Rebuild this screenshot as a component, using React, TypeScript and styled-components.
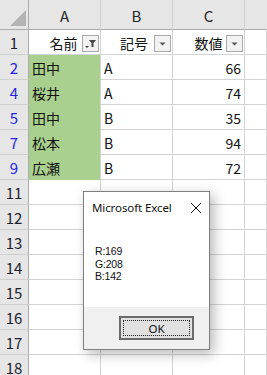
import React, { ReactElement } from 'react';
import styled, { createGlobalStyle, css } from 'styled-components';

type Row = {
  num: number;
  name?: string;
  code?: string;
  value?: number;
};

const rows: Row[] = [
  { num: 2, name: '田中', code: 'A', value: 66 },
  { num: 4, name: '桜井', code: 'A', value: 74 },
  { num: 5, name: '田中', code: 'B', value: 35 },
  { num: 7, name: '松本', code: 'B', value: 94 },
  { num: 9, name: '広瀬', code: 'B', value: 72 },
  { num: 11 },
  { num: 12 },
  { num: 13 },
  { num: 14 },
  { num: 15 },
  { num: 16 },
  { num: 17 },
  { num: 18 },
];

const messageLines = ['R:169', 'G:208', 'B:142'];

const GRID = '#d4d4d4';
const GREEN = '#a9d08e';

function FilterIcon({ applied }: { applied?: boolean }): ReactElement {
  if (applied) {
    return (
      <svg width="15" height="15" viewBox="0 0 15 15">
        <polygon points="2,10 6,10 4,12" fill="#444" />
        <polygon points="6,4 13,4 10.5,7 10.5,11 8.5,11 8.5,7" fill="#444" />
      </svg>
    );
  }
  return (
    <svg width="15" height="15" viewBox="0 0 15 15">
      <polygon points="4.5,6.5 10.5,6.5 7.5,9.5" fill="#555" />
    </svg>
  );
}

function App(): ReactElement {
  return (
    <>
      <GlobalStyle />
      <Page>
        <Sheet>
          <Corner>
            <svg width="28" height="29" viewBox="0 0 28 29">
              <polygon points="26,10 26,26 10,26" fill="#b4b4b4" />
            </svg>
          </Corner>
          <ColHeader>A</ColHeader>
          <ColHeader>B</ColHeader>
          <ColHeader>C</ColHeader>
          <ColHeader $last />

          <RowHeader>1</RowHeader>
          <Cell $align="center">
            <HeaderLabel $shift={-2}>名前</HeaderLabel>
            <FilterButton>
              <FilterIcon applied />
            </FilterButton>
          </Cell>
          <Cell $align="center">
            <HeaderLabel $shift={-5}>記号</HeaderLabel>
            <FilterButton>
              <FilterIcon />
            </FilterButton>
          </Cell>
          <Cell $align="center">
            <HeaderLabel $shift={0}>数値</HeaderLabel>
            <FilterButton>
              <FilterIcon />
            </FilterButton>
          </Cell>
          <Cell />

          {rows.map((r) => (
            <React.Fragment key={r.num}>
              <RowHeader $filtered={!!r.name}>{r.num}</RowHeader>
              <Cell $fill={r.name ? GREEN : undefined}>{r.name}</Cell>
              <Cell>{r.code}</Cell>
              <Cell $align="right">{r.value}</Cell>
              <Cell />
            </React.Fragment>
          ))}
        </Sheet>

        <Dialog>
          <TitleBar>
            <Title>Microsoft Excel</Title>
            <CloseButton>
              <svg width="12" height="12" viewBox="0 0 12 12">
                <path d="M1 1 L11 11 M11 1 L1 11" stroke="#111" strokeWidth="1" />
              </svg>
            </CloseButton>
          </TitleBar>
          <Message>
            {messageLines.map((line) => (
              <MessageLine key={line}>{line}</MessageLine>
            ))}
          </Message>
          <Footer>
            <OkButton>
              <OkFocus>OK</OkFocus>
            </OkButton>
          </Footer>
        </Dialog>
      </Page>
    </>
  );
}

const GlobalStyle = createGlobalStyle`
  html, body {
    margin: 0;
    padding: 0;
    background: #ffffff;
    overflow: hidden;
  }
`;

const Page = styled.div`
  position: relative;
  width: 267px;
  height: 375px;
  overflow: hidden;
  font-family: 'Noto Sans CJK JP', 'Noto Sans', sans-serif;
`;

const Sheet = styled.div`
  display: grid;
  grid-template-columns: 29px 72px 72px 72px 1fr;
  grid-template-rows: 30px;
  grid-auto-rows: 25px;
`;

const headerBase = css`
  box-sizing: border-box;
  background: #e6e6e6;
  color: #262626;
  font-size: 15px;
  display: flex;
  align-items: center;
  justify-content: center;
`;

const Corner = styled.div`
  ${headerBase}
  border-right: 1px solid #ababab;
  border-bottom: 1px solid #ababab;
  align-items: flex-end;
  justify-content: flex-end;
`;

type ColHeaderProps = { $last?: boolean };
const ColHeader = styled.div<ColHeaderProps>`
  ${headerBase}
  border-right: 1px solid ${(p) => (p.$last ? '#e6e6e6' : '#cfcfcf')};
  border-bottom: 1px solid #ababab;
  padding-top: 1px;
`;

type RowHeaderProps = { $filtered?: boolean };
const RowHeader = styled.div<RowHeaderProps>`
  ${headerBase}
  border-right: 1px solid #ababab;
  border-bottom: 1px solid #cfcfcf;
  color: ${(p) => (p.$filtered ? '#2424e0' : '#1e1e2e')};
`;

type CellProps = { $fill?: string; $align?: 'left' | 'center' | 'right' };
const Cell = styled.div<CellProps>`
  position: relative;
  box-sizing: border-box;
  display: flex;
  align-items: center;
  justify-content: ${(p) =>
    p.$align === 'right' ? 'flex-end' : p.$align === 'center' ? 'center' : 'flex-start'};
  padding: 1px 3px 0 3px;
  font-size: 14px;
  color: #111;
  background: ${(p) => p.$fill ?? '#ffffff'};
  border-right: 1px solid ${GRID};
  border-bottom: 1px solid ${(p) => p.$fill ?? GRID};
  white-space: nowrap;
`;

type HeaderLabelProps = { $shift: number };
const HeaderLabel = styled.span<HeaderLabelProps>`
  margin-left: ${(p) => p.$shift}px;
`;

const FilterButton = styled.div`
  position: absolute;
  right: 1px;
  bottom: 2px;
  width: 15px;
  height: 15px;
  border: 1px solid #a9a9a9;
  background: #f2f2f2;
  display: flex;
`;

const Dialog = styled.div`
  position: absolute;
  left: 83px;
  top: 191px;
  width: 127px;
  box-sizing: border-box;
  border: 1px solid #7f7f7f;
  background: #ffffff;
  box-shadow: 4px 4px 12px rgba(0, 0, 0, 0.28);
  font-family: 'Noto Sans', 'Liberation Sans', sans-serif;
  color: #111;
`;

const TitleBar = styled.div`
  height: 31px;
  display: flex;
  align-items: center;
  justify-content: space-between;
  padding: 0 7px 0 8px;
`;

const Title = styled.span`
  font-size: 11.5px;
  letter-spacing: -0.1px;
`;

const CloseButton = styled.span`
  display: flex;
  margin-top: 1px;
`;

const Message = styled.div`
  height: 84px;
  box-sizing: border-box;
  padding: 22px 0 0 11px;
  display: flex;
  flex-direction: column;
`;

const MessageLine = styled.div`
  height: 12.5px;
  font-family: 'Liberation Sans', Arial, sans-serif;
  font-size: 10.5px;
  line-height: 12.5px;
  letter-spacing: -0.2px;
`;

const Footer = styled.div`
  height: 42px;
  background: #f0f0f0;
  display: flex;
  align-items: center;
  justify-content: flex-end;
  padding-right: 15px;
`;

const OkButton = styled.div`
  width: 75px;
  height: 24px;
  box-sizing: border-box;
  border: 2px solid #6a6a6a;
  background: #e1e1e1;
  padding: 2px;
  display: flex;
`;

const OkFocus = styled.div`
  flex: 1;
  border: 1px dotted #222;
  display: flex;
  align-items: center;
  justify-content: center;
  font-size: 11.5px;
`;

export default App;
